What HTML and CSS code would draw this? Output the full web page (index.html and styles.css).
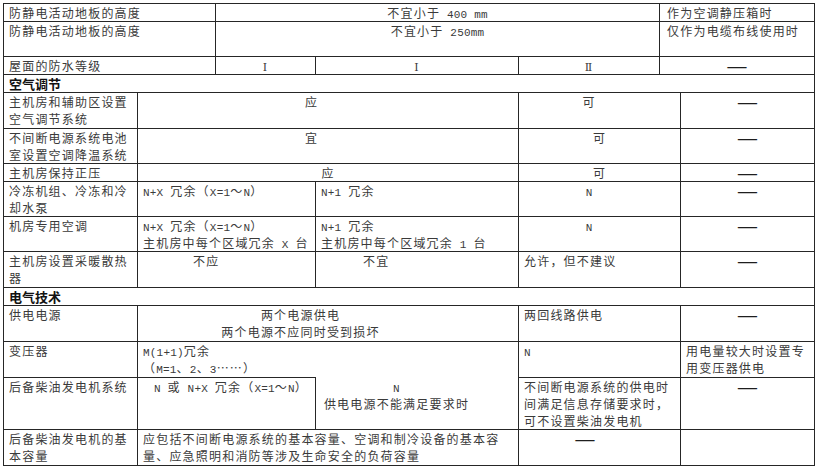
FILE: index.html
```html
<!DOCTYPE html>
<html lang="zh-CN">
<head>
<meta charset="utf-8">
<title>数据中心技术要求</title>
<link rel="stylesheet" href="styles.css">
</head>
<body>
<table class="spec">
  <colgroup>
    <col class="c1"><col class="c2"><col class="c3"><col class="c4"><col class="c5"><col class="c6"><col class="c7">
  </colgroup>
  <tbody>
    <tr>
      <td colspan="2">防静电活动地板的高度</td>
      <td colspan="3" class="ctr">不宜小于<span class="lat"> 400 mm</span></td>
      <td colspan="2" class="note">作为空调静压箱时</td>
    </tr>
    <tr>
      <td colspan="2">防静电活动地板的高度<br>&nbsp;</td>
      <td colspan="3" class="ctr">不宜小于<span class="lat"> 250mm</span></td>
      <td colspan="2" class="note">仅作为电缆布线使用时</td>
    </tr>
    <tr>
      <td colspan="2">屋面的防水等级</td>
      <td class="ctr"><span class="roman">Ⅰ</span></td>
      <td class="ctr"><span class="roman">Ⅰ</span></td>
      <td class="ctr"><span class="roman">Ⅱ</span></td>
      <td colspan="2" class="ctr dash">——</td>
    </tr>
    <tr class="sec"><td colspan="7">空气调节</td></tr>
    <tr class="tall">
      <td>主机房和辅助区设置<br>空气调节系统</td>
      <td colspan="3" class="ctr shift-a">应</td>
      <td colspan="2" class="ctr shift-c">可</td>
      <td class="ctr dash">——</td>
    </tr>
    <tr>
      <td>不间断电源系统电池<br>室设置空调降温系统</td>
      <td colspan="3" class="ctr shift-a">宜</td>
      <td colspan="2" class="ctr">可</td>
      <td class="ctr dash">——</td>
    </tr>
    <tr>
      <td>主机房保持正压</td>
      <td colspan="3" class="ctr">应</td>
      <td colspan="2" class="ctr">可</td>
      <td class="ctr dash">——</td>
    </tr>
    <tr>
      <td>冷冻机组、冷冻和冷<br>却水泵</td>
      <td colspan="2"><span class="lat">N+X </span>冗余（<span class="lat">X=1</span>～<span class="lat">N</span>）</td>
      <td><span class="lat">N+1 </span>冗余</td>
      <td colspan="2" class="ctr shift-c"><span class="lat">N</span></td>
      <td class="ctr dash">——</td>
    </tr>
    <tr>
      <td>机房专用空调</td>
      <td colspan="2"><span class="lat">N+X </span>冗余（<span class="lat">X=1</span>～<span class="lat">N</span>）<br>主机房中每个区域冗余<span class="lat"> X </span>台</td>
      <td><span class="lat">N+1 </span>冗余<br>主机房中每个区域冗余<span class="lat"> 1 </span>台</td>
      <td colspan="2" class="ctr shift-c"><span class="lat">N</span></td>
      <td class="ctr dash">——</td>
    </tr>
    <tr class="tall">
      <td>主机房设置采暖散热<br>器</td>
      <td colspan="2" class="ind-a">不应</td>
      <td class="ind-b">不宜</td>
      <td colspan="2">允许，但不建议</td>
      <td class="ctr dash">——</td>
    </tr>
    <tr class="sec"><td colspan="7">电气技术</td></tr>
    <tr class="tall">
      <td>供电电源</td>
      <td colspan="3" class="ctr shift-b">两个电源供电<br>两个电源不应同时受到损坏</td>
      <td colspan="2">两回线路供电</td>
      <td class="ctr dash">——</td>
    </tr>
    <tr class="tall">
      <td>变压器</td>
      <td colspan="3"><span class="lat">M(1+1)</span>冗余<br>（<span class="lat">M=1</span>、<span class="lat">2</span>、<span class="lat">3</span>……）</td>
      <td colspan="2"><span class="lat">N</span></td>
      <td>用电量较大时设置专<br>用变压器供电</td>
    </tr>
    <tr>
      <td>后备柴油发电机系统</td>
      <td colspan="2" class="ind-c"><span class="lat">N </span>或<span class="lat"> N+X </span>冗余（<span class="lat">X=1</span>～<span class="lat">N</span>）</td>
      <td class="ctr shift-d open-top"><span class="lat">N</span><br>供电电源不能满足要求时</td>
      <td colspan="2">不间断电源系统的供电时<br>间满足信息存储要求时，<br>可不设置柴油发电机</td>
      <td class="ctr dash">——</td>
    </tr>
    <tr class="tall">
      <td>后备柴油发电机的基<br>本容量</td>
      <td colspan="3">应包括不间断电源系统的基本容量、空调和制冷设备的基本容<br>量、应急照明和消防等涉及生命安全的负荷容量</td>
      <td colspan="2" class="ctr shift-e dash">——</td>
      <td></td>
    </tr>
  </tbody>
</table>
</body>
</html>
```
FILE: styles.css
```css
html, body {
  margin: 0;
  background: #ffffff;
}

body {
  padding: 3px 0 0 3px;
}

.spec {
  border-collapse: collapse;
  table-layout: fixed;
  width: 812px;
  font-family: "Noto Sans CJK SC", sans-serif;
  font-size: 12px;
  line-height: 17px;
  letter-spacing: 1.2px;
  color: #3a3a3a;
}

.c1 { width: 134px; }
.c2 { width: 78px; }
.c3 { width: 100px; }
.c4 { width: 203px; }
.c5 { width: 141px; }
.c6 { width: 21px; }
.c7 { width: 134px; }

.spec td {
  border: 1px solid #262626;
  padding: 0 4px 0 5px;
  vertical-align: top;
  white-space: nowrap;
  overflow: hidden;
}

.lat {
  font-family: "Liberation Mono", monospace;
  font-size: 11px;
  line-height: 10px;
  letter-spacing: 0.2px;
}

.roman {
  font-family: "DejaVu Serif", "Noto Sans CJK SC", serif;
  font-size: 11px;
  line-height: 10px;
}

.spec .tall td {
  padding-bottom: 1px;
}

.spec td.note {
  padding-left: 7px;
}

.spec td.ctr {
  text-align: center;
  padding-left: 0;
  padding-right: 0;
}

.spec td.dash {
  color: #1e1e1e;
  font-weight: 700;
  letter-spacing: 0;
}

.spec td.shift-a { padding-right: 33px; }
.spec td.shift-b { padding-right: 55px; }
.spec td.shift-c { padding-right: 21px; }
.spec td.shift-d { padding-right: 41px; }
.spec td.shift-e { padding-right: 29px; }

.spec td.ind-a { padding-left: 55px; }
.spec td.ind-b { padding-left: 47px; }
.spec td.ind-c { padding-left: 16px; }

.spec td.open-top {
  border-top-style: hidden;
}

.spec .sec td {
  font-weight: 700;
  font-size: 13px;
  letter-spacing: 0;
  color: #111111;
}
```
